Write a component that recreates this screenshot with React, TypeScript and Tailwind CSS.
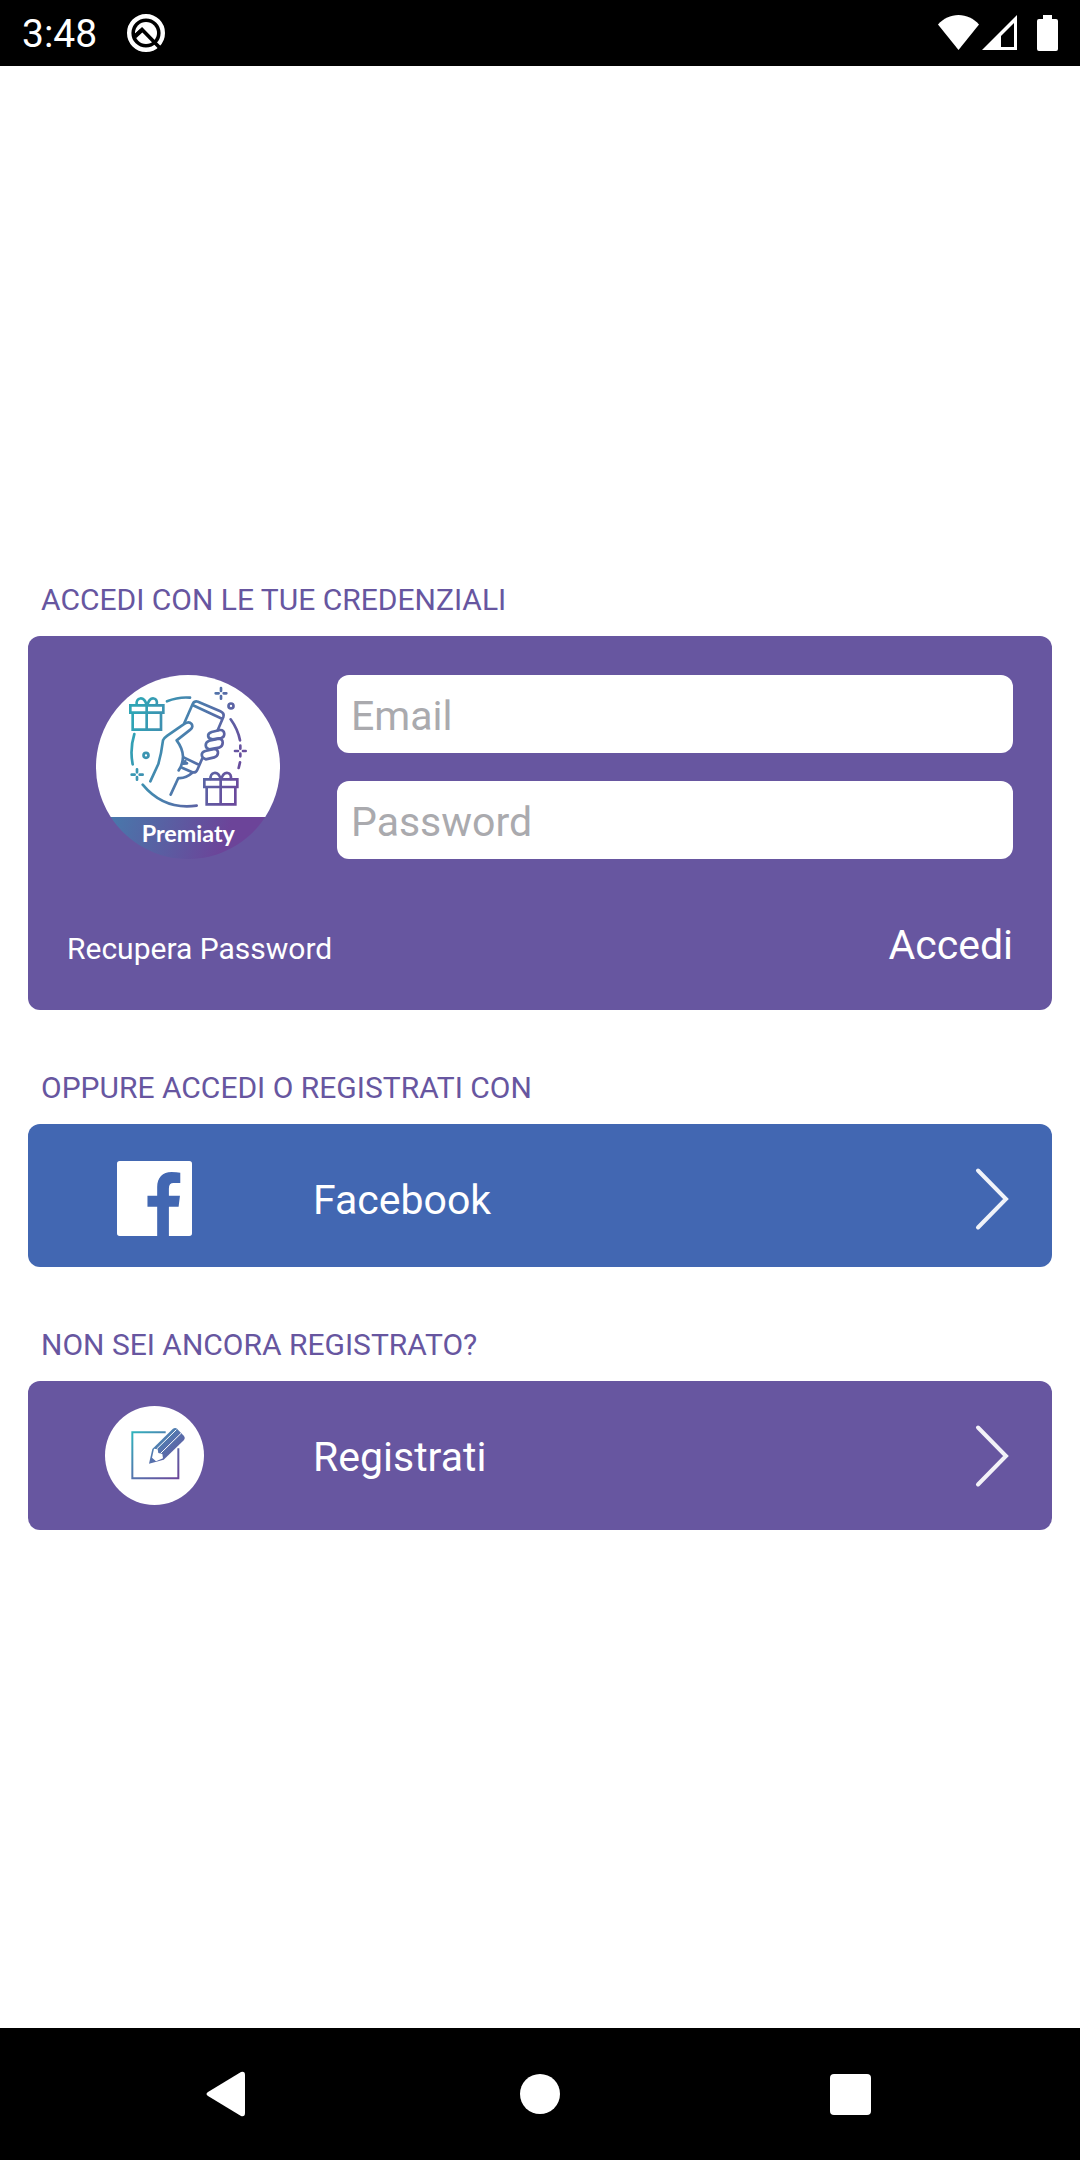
import type { ReactNode } from "react";

function StatusBar() {
  return (
    <header className="flex h-[66px] shrink-0 items-center justify-between bg-black pr-[22px] pl-[22px] text-white">
      <div className="flex items-center gap-[29px]">
        <span className="pt-0.5 text-[39px] leading-[46px]">3:48</span>
        <svg width="40" height="40" viewBox="0 0 40 40" fill="none">
          <circle cx="20" cy="20" r="16.8" stroke="white" strokeWidth="4.4" />
          <circle cx="20" cy="20" r="11" fill="white" />
          <path d="M9 23l7-6.500L35 36" stroke="black" strokeWidth="3.600" />
          <path d="M9 23.500l6.500-6" stroke="black" strokeWidth="4" />
        </svg>
      </div>
      <div className="flex items-center">
        <svg width="41" height="36" viewBox="0 0 41 36" fill="white">
          <path d="M20.500 35L0 9.500C5.500 3.500 12.500 0 20.500 0S35.500 3.500 41 9.500z" />
        </svg>
        <svg className="ml-[3px]" width="35" height="36" viewBox="0 0 35 36">
          <path d="M0 35L35 0v35z" fill="white" />
          <path d="M19 21l13-13v24H19z" fill="black" />
        </svg>
        <svg className="ml-5" width="21" height="36" viewBox="0 0 21 36" fill="white">
          <path d="M6 0h9v4h4a2 2 0 0 1 2 2v28a2 2 0 0 1-2 2H2a2 2 0 0 1-2-2V6a2 2 0 0 1 2-2h4z" />
        </svg>
      </div>
    </header>
  );
}

function Logo() {
  return (
    <svg width="184" height="184" viewBox="48 44 552 552" role="img" aria-label="Premiaty">
      <defs>
        <linearGradient id="line" gradientUnits="userSpaceOnUse" x1="150" y1="200" x2="490" y2="320">
          <stop offset="0" stopColor="#2fa5b5" />
          <stop offset="0.45" stopColor="#4a7fad" />
          <stop offset="1" stopColor="#6a4a9c" />
        </linearGradient>
        <linearGradient id="band" gradientUnits="userSpaceOnUse" x1="100" y1="450" x2="430" y2="560">
          <stop offset="0" stopColor="#4878ab" />
          <stop offset="1" stopColor="#6c4499" />
        </linearGradient>
      </defs>
      <path d="M92.300 470A276 276 0 1 1 555.700 470z" fill="white" />
      <path d="M92.300 470A276 276 0 0 0 555.700 470z" fill="url(#band)" />
      <g fill="none" stroke="url(#line)" strokeWidth="8" strokeLinecap="round" strokeLinejoin="round">
        {/* gifts */}
        <g strokeLinejoin="miter">
          <path d="M151 135H250V157H151zM158 157V208H243V157M200 135V208" />
          <path d="M373 357H472V380H373zM380 380V432H466V380M422 357V432" />
        </g>
        <path d="M200 134C192 104 166 112 170 133M202 134C210 104 236 112 230 133" />
        <path d="M422 356C414 328 388 336 392 356M424 356C432 328 458 336 452 356" />
        {/* dashed orbit */}
        <path d="M261 123Q296 109 330 112M452 177Q474 208 480 240M480 306L476 323" />
        <path d="M163 221Q149 266 158 312M188 373Q252 450 350 436" />
        {/* phone */}
        <path d="M313 188L338 131Q343 121 354 124L421 153Q434 159 430 170L413 210M339 135L426 175" />
        <path d="M311 291L358 314M306 322L337 336Q348 338 352 328L367 294" />
        {/* thumb and arm */}
        <path d="M211 363L235 311Q244 280 249 240Q252 233 262 226L314 190C332 178 345 198 331 208L290 240Q308 264 309 289Q308 314 296 330" />
        <path d="M316 302L310 310L321 309M272 403L295 353Q317 355 336 338" />
        {/* fingers */}
        <path d="M395 215L420 209C435 208 438 229 423 233L398 237C382 235 379 221 395 215z" />
        <path d="M388 241L416 235C433 236 431 258 417 262L388 267C374 264 373 246 388 241z" />
        <path d="M376 272L403 266C420 269 415 288 403 291L377 297C362 292 361 276 376 272z" />
        {/* sparkles */}
        <path d="M423 83V92M423 107V115M407 99H416M431 99H439" />
        <path d="M481 256V265M481 280V288M465 272H474M489 272H497" />
        <path d="M171 327V336M171 350V358M155 343H164M179 343H188" />
        <circle cx="453" cy="137" r="7.5" />
        <circle cx="198" cy="285" r="7.5" />
      </g>
      <text
        x="325"
        y="545"
        textAnchor="middle"
        fill="white"
        className="font-[Lato,sans-serif] text-[70px] font-bold"
      >
        Premiaty
      </text>
    </svg>
  );
}

function FacebookIcon() {
  return (
    <svg width="75" height="75" viewBox="112 184 224 224" fill="white">
      <path d="M120 184H328Q336 184 336 192V400Q336 408 328 408H267V321H296L300 288H267V266Q267 250 281 250H301V219Q290 217 275 217C248 217 232 234 232 262V288H203V321H232V408H120Q112 408 112 400V192Q112 184 120 184z" />
    </svg>
  );
}

function SignUpIcon() {
  return (
    <svg width="99" height="99" viewBox="75 138 297 297">
      <defs>
        <linearGradient id="sheet" gradientUnits="userSpaceOnUse" x1="155" y1="215" x2="297" y2="357">
          <stop offset="0" stopColor="#2fb5bd" />
          <stop offset="0.5" stopColor="#5573ad" />
          <stop offset="1" stopColor="#6c4499" />
        </linearGradient>
      </defs>
      <circle cx="223.500" cy="286.500" r="148.500" fill="white" />
      <path d="M257 217H157V355H295V265" fill="none" stroke="url(#sheet)" strokeWidth="6" />
      <path
        d="M207 311L217 267L278 207Q285 202 291 206L312 228Q317 234 312 240L251 299z"
        fill="url(#sheet)"
      />
      <path d="M222 266L233 268L235 279L247 282L249 295L228 304L216 293z" fill="white" />
      <path d="M230 267L289 209M242 280L303 220" stroke="white" strokeWidth="3" />
    </svg>
  );
}

function Chevron() {
  return (
    <svg className="ml-auto" width="35" height="64" viewBox="0 0 35 64" fill="none">
      <path d="M3 3.500L31 32L3 60.500" stroke="white" strokeOpacity="0.92" strokeWidth="4" strokeLinecap="round" />
    </svg>
  );
}

function Section({ title, children }: { title: string; children: ReactNode }) {
  return (
    <section className="flex flex-col gap-[18px]">
      <h2 className="px-[13px] text-[30px] leading-9 text-[#6756a0] uppercase">{title}</h2>
      {children}
    </section>
  );
}

function Field({ label, type }: { label: string; type: string }) {
  return (
    <input
      type={type}
      placeholder={label}
      aria-label={label}
      className="h-[78px] w-full rounded-xl bg-white px-3.5 pt-1 text-[41px] text-black outline-none placeholder:text-[#aaaaae]"
    />
  );
}

export default function App() {
  return (
    <div className="flex min-h-screen flex-col bg-white font-[Roboto,sans-serif]">
      <StatusBar />

      <main className="flex flex-1 flex-col justify-center gap-15 px-7 pt-[18px]">
        <Section title="Accedi con le tue credenziali">
          <form
            className="rounded-xl bg-[#6756a0] p-[39px] text-white"
            onSubmit={(e) => e.preventDefault()}
          >
            <div className="flex items-center gap-7">
              <div className="flex w-[242px] shrink-0 justify-center">
                <Logo />
              </div>
              <div className="flex flex-1 flex-col gap-7">
                <Field label="Email" type="email" />
                <Field label="Password" type="password" />
              </div>
            </div>
            <div className="mt-15 flex items-baseline justify-between">
              <a href="#recupera" className="text-[30px] leading-9">
                Recupera Password
              </a>
              <button type="submit" className="text-[41px] leading-[52px]">
                Accedi
              </button>
            </div>
          </form>
        </Section>

        <Section title="Oppure accedi o registrati con">
          <button className="flex h-[143px] items-center gap-8 rounded-xl bg-[#4267b2] pt-1.5 pr-[42px] text-white">
            <span className="flex w-[253px] justify-center">
              <FacebookIcon />
            </span>
            <span className="pt-0.5 text-[41px] leading-[52px]">Facebook</span>
            <Chevron />
          </button>
        </Section>

        <Section title="Non sei ancora registrato?">
          <button className="flex h-[149px] items-center gap-8 rounded-xl bg-[#6756a0] pr-[42px] text-white">
            <span className="flex w-[253px] justify-center">
              <SignUpIcon />
            </span>
            <span className="pt-0.5 text-[41px] leading-[52px]">Registrati</span>
            <Chevron />
          </button>
        </Section>
      </main>

      <nav className="grid h-[132px] shrink-0 grid-cols-3 bg-black px-[75px]">
        <button aria-label="Indietro" className="flex items-center justify-center">
          <svg width="48" height="48" viewBox="0 0 48 48" fill="white">
            <path d="M2 22L35 2Q39 1 39 5V43Q39 47 35 46L2 26Q-1 24 2 22z" />
          </svg>
        </button>
        <button aria-label="Home" className="flex items-center justify-center">
          <span className="size-10 rounded-full bg-white" />
        </button>
        <button aria-label="Recenti" className="flex items-center justify-center">
          <span className="size-[41px] rounded-[4px] bg-white" />
        </button>
      </nav>
    </div>
  );
}
